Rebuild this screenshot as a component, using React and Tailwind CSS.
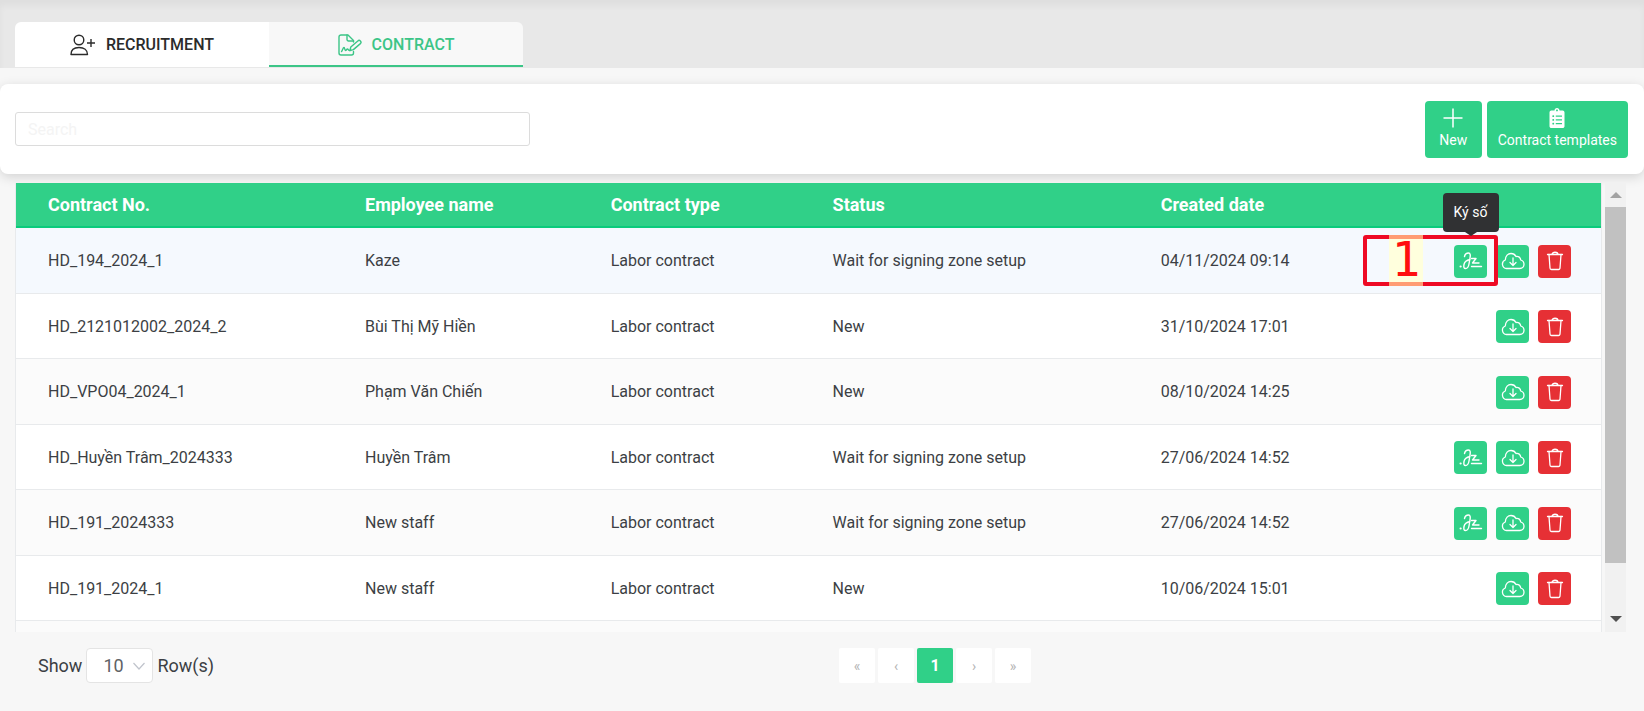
import { FaClipboardList } from "react-icons/fa";

const contracts = [
    { no: "HD_194_2024_1", name: "Kaze", status: "Wait for signing zone setup", date: "04/11/2024 09:14", active: true },
    { no: "HD_2121012002_2024_2", name: "Bùi Thị Mỹ Hiền", status: "New", date: "31/10/2024 17:01" },
    { no: "HD_VPO04_2024_1", name: "Phạm Văn Chiến", status: "New", date: "08/10/2024 14:25" },
    { no: "HD_Huyền Trâm_2024333", name: "Huyền Trâm", status: "Wait for signing zone setup", date: "27/06/2024 14:52" },
    { no: "HD_191_2024333", name: "New staff", status: "Wait for signing zone setup", date: "27/06/2024 14:52" },
    { no: "HD_191_2024_1", name: "New staff", status: "New", date: "10/06/2024 15:01" },
];

function UserPlusIcon() {
    return (
        <svg viewBox="0 0 26 22" className="w-[26px] h-[22px]" fill="none" stroke="currentColor" strokeWidth="1.4">
            <circle cx="9" cy="6" r="4.8" />
            <path d="M1 20.5C1 16 4 13.5 9 13.5s8.500 2.500 8.500 7z" strokeLinejoin="round" />
            <path d="M21 5v8M17 9h8" />
        </svg>
    );
}

function FileSignIcon() {
    return (
        <svg viewBox="0 0 24 22" className="w-6 h-[22px]" fill="none" stroke="currentColor" strokeWidth="1.4" strokeLinecap="round" strokeLinejoin="round">
            <path d="M15.500 8V6.500L10 1H3a2 2 0 0 0-2 2v16a2 2 0 0 0 2 2h10.500a2 2 0 0 0 2-2v-1.500" />
            <path d="M9 1v4.500a1.500 1.500 0 0 0 1.500 1.500h5" />
            <path d="M3.500 17.500c1-1 1.500-4 2.500-4s.5 3 1.500 3 1-1.500 2-1.500.5 1.500 2.500 1.500" />
            <path d="M12 16.500l.8-3.500 7-6a1.800 1.800 0 0 1 2.600 2.600l-7 6z" />
        </svg>
    );
}

function SignIcon() {
    return (
        <svg viewBox="0 0 24 20" className="w-6 h-5" fill="none" stroke="currentColor" strokeWidth="1.4" strokeLinecap="round" strokeLinejoin="round">
            <path d="M1.500 15.500h.2" strokeWidth="2" />
            <path d="M5.500 5.500C6 3 8 2 9.500 2c2 0 2 2.500 1.500 5l-1 6c-.5 3-2 4.500-3.500 4.500S4.500 16 5 13.500 8.500 9 11 8.500" />
            <path d="M12.500 7.500h4.500L13.500 12h6.500" />
            <path d="M12.500 15.500h10" />
        </svg>
    );
}

function CloudIcon() {
    return (
        <svg viewBox="0 0 24 18" className="w-6 h-[18px]" fill="none" stroke="currentColor" strokeWidth="1.3" strokeLinecap="round" strokeLinejoin="round">
            <path d="M5.500 16.500A4.400 4.400 0 0 1 4.300 8C4.500 4 7 1.500 10 1.500c2.200 0 4 1 5 3 2.500-.5 4.500 1 4.700 3.500 2 .6 3.300 2.200 3.300 4.300 0 2.400-1.800 4.200-4.200 4.200z" />
            <path d="M12 6v7M9 10.500l3 3 3-3" />
        </svg>
    );
}

function TrashIcon() {
    return (
        <svg viewBox="0 0 18 20" className="w-[18px] h-5" fill="none" stroke="currentColor" strokeWidth="1.3" strokeLinecap="round" strokeLinejoin="round">
            <path d="M1.500 3.500h15M6 3.500c0-3 6-3 6 0" />
            <path d="M3 3.500l1 13.500a1.500 1.500 0 0 0 1.500 1.500h7A1.500 1.500 0 0 0 14 17l1-13.500" />
        </svg>
    );
}

function ActionButton({ label, danger, children }) {
    return (
        <button
            type="button"
            aria-label={label}
            className={`w-[33px] h-[33px] rounded flex items-center justify-center text-white ${
                danger ? "bg-[#e63035]" : "bg-[#30d088]"
            }`}
        >
            {children}
        </button>
    );
}

function Tabs() {
    return (
        <header className="h-[68px] bg-[#e8e8e8] shadow-[inset_0_6px_6px_rgba(0,0,0,0.04)] px-[15px] flex items-end">
            <nav className="flex h-[45px] mb-px rounded-t-md overflow-hidden font-medium text-base">
                <a href="#recruitment" className="w-[254px] bg-white text-[#2b2b2b] flex items-center justify-center gap-2.5">
                    <UserPlusIcon />
                    RECRUITMENT
                </a>
                <a
                    href="#contract"
                    aria-current="page"
                    className="w-[254px] pt-0.5 bg-[#f8f8f8] text-[#3cc587] border-b-2 border-[#3cc587] flex items-center justify-center gap-2.5"
                >
                    <FileSignIcon />
                    CONTRACT
                </a>
            </nav>
        </header>
    );
}

function Toolbar() {
    return (
        <section className="mt-4 h-[90px] bg-white rounded-lg shadow-[0_3px_12px_rgba(0,0,0,0.15)] pl-[15px] pr-4 flex items-center justify-between">
            <input
                type="text"
                aria-label="Search"
                placeholder="Search"
                className="w-[515px] h-[34px] px-3 border border-[#dcdcdc] rounded-[3px] bg-white text-base placeholder:text-[#f4f4f4]"
            />
            <div className="flex gap-[5px] text-sm text-white">
                <button type="button" className="w-[57px] h-[57px] rounded bg-[#30d088] flex flex-col items-center justify-center gap-0.5">
                    <svg viewBox="0 0 20 20" className="w-5 h-5" stroke="currentColor" strokeWidth="1.5">
                        <path d="M10 0.500v19M0.500 10h19" />
                    </svg>
                    New
                </button>
                <button type="button" className="h-[57px] px-[11px] rounded bg-[#30d088] flex flex-col items-center justify-center gap-0.5">
                    <FaClipboardList className="w-5 h-5" />
                    Contract templates
                </button>
            </div>
        </section>
    );
}

function SignMarker() {
    return (
        <>
            <div className="absolute -right-[11px] -top-[10px] w-[135px] h-[51px] border-4 border-[#ee0a24] rounded-[3px] pointer-events-none">
                <div className="absolute left-[22px] -top-1 w-[34px] h-[51px] border-y-4 border-[#ff9c74] bg-[#ffffdd] text-[#ff0f0f] text-5xl leading-[41px] font-['DejaVu_Sans_Mono',monospace] flex justify-center">
                    1
                </div>
            </div>
            <div role="tooltip" className="absolute left-1/2 -translate-x-1/2 bottom-[46px] h-[39px] w-14 rounded bg-[#303133] text-white text-sm flex items-center justify-center">
                Ký số
                <span className="absolute top-full left-1/2 -translate-x-1/2 border-x-[6px] border-t-[4px] border-x-transparent border-t-[#303133]" />
            </div>
        </>
    );
}

function ContractRow({ contract }) {
    return (
        <tr
            className={`odd:h-[66px] even:h-[65px] border-b border-[#e8eaec] ${
                contract.active ? "bg-[#f5f9fe]" : "bg-white odd:bg-[#fbfbfb]"
            }`}
        >
            <td className="px-8 pt-0.5">{contract.no}</td>
            <td className="px-8 pt-0.5">{contract.name}</td>
            <td className="px-8 pt-0.5">Labor contract</td>
            <td className="px-8 pt-0.5">{contract.status}</td>
            <td className="px-8 pt-0.5">{contract.date}</td>
            <td className="pr-[30px] pt-0.5">
                <div className="flex justify-end gap-[9px]">
                    {contract.status !== "New" && (
                        <div className="relative">
                            <ActionButton label="Ký số">
                                <SignIcon />
                            </ActionButton>
                            {contract.active && <SignMarker />}
                        </div>
                    )}
                    <ActionButton label="Download">
                        <CloudIcon />
                    </ActionButton>
                    <ActionButton label="Delete" danger>
                        <TrashIcon />
                    </ActionButton>
                </div>
            </td>
        </tr>
    );
}

function Scrollbar() {
    return (
        <div aria-hidden="true" className="w-[21px] bg-[#f1f1f1] flex flex-col items-center ml-[3px]">
            <div className="h-6 flex items-center">
                <div className="border-x-[6px] border-b-[6px] border-x-transparent border-b-[#a3a3a3]" />
            </div>
            <div className="w-full h-[356px] bg-[#c1c1c1]" />
            <div className="mt-auto h-[26px] flex items-center">
                <div className="border-x-[6px] border-t-[6px] border-x-transparent border-t-[#505050]" />
            </div>
        </div>
    );
}

function ContractTable() {
    return (
        <section className="mt-[9px] ml-[15px] mr-[18px] h-[449px] flex overflow-hidden">
            <div className="flex-1 border-x border-[#e8eaec]">
                <table className="w-full table-fixed border-collapse text-left text-base text-[#3c3f44]">
                    <thead>
                        <tr className="h-11 bg-[#30d088] border-b-2 border-[#0acb7c] text-white text-lg">
                            <th className="w-[20%] px-8 font-bold">Contract No.</th>
                            <th className="w-[15.5%] px-8 font-bold">Employee name</th>
                            <th className="w-[14%] px-8 font-bold">Contract type</th>
                            <th className="w-[20.7%] px-8 font-bold">Status</th>
                            <th className="px-8 font-bold">Created date</th>
                            <th className="w-[240px]" aria-label="Actions" />
                        </tr>
                    </thead>
                    <tbody>
                        {contracts.map((contract) => (
                            <ContractRow key={contract.no} contract={contract} />
                        ))}
                        <tr className="h-[66px] bg-[#fbfbfb]">
                            <td colSpan={6} />
                        </tr>
                    </tbody>
                </table>
            </div>
            <Scrollbar />
        </section>
    );
}

function PageButton({ label, current, children }) {
    return (
        <button
            type="button"
            aria-label={label}
            className={`w-9 h-[35px] rounded-xs flex items-center justify-center ${
                current ? "bg-[#30d088] text-white text-base font-bold" : "bg-white text-[#b4b4b4] text-sm"
            }`}
        >
            {children}
        </button>
    );
}

function Pagination() {
    return (
        <footer className="mt-4 px-[38px] pb-7 flex items-center text-lg text-[#3c3f44]">
            <div className="flex-1 flex items-center gap-1">
                <label htmlFor="rows">Show</label>
                <div className="relative">
                    <select id="rows" className="appearance-none w-[67px] h-[35px] pl-4 border border-[#e4e4e4] rounded bg-white text-[#606266]">
                        <option>10</option>
                    </select>
                    <svg viewBox="0 0 12 8" className="absolute right-2 top-[14px] w-3 h-2 pointer-events-none" fill="none" stroke="#c0c4cc" strokeWidth="1.2">
                        <path d="M0.500 1l5.500 6 5.500-6" />
                    </svg>
                </div>
                <span>Row(s)</span>
            </div>
            <nav aria-label="Pages" className="flex gap-[3px]">
                <PageButton label="First page">«</PageButton>
                <PageButton label="Previous page">‹</PageButton>
                <PageButton label="Page 1" current>1</PageButton>
                <PageButton label="Next page">›</PageButton>
                <PageButton label="Last page">»</PageButton>
            </nav>
            <div className="w-[575px]" />
        </footer>
    );
}

export default function App() {
    return (
        <main className="min-h-screen bg-[#f7f7f7] font-[Roboto,sans-serif]">
            <Tabs />
            <Toolbar />
            <ContractTable />
            <Pagination />
        </main>
    );
}
